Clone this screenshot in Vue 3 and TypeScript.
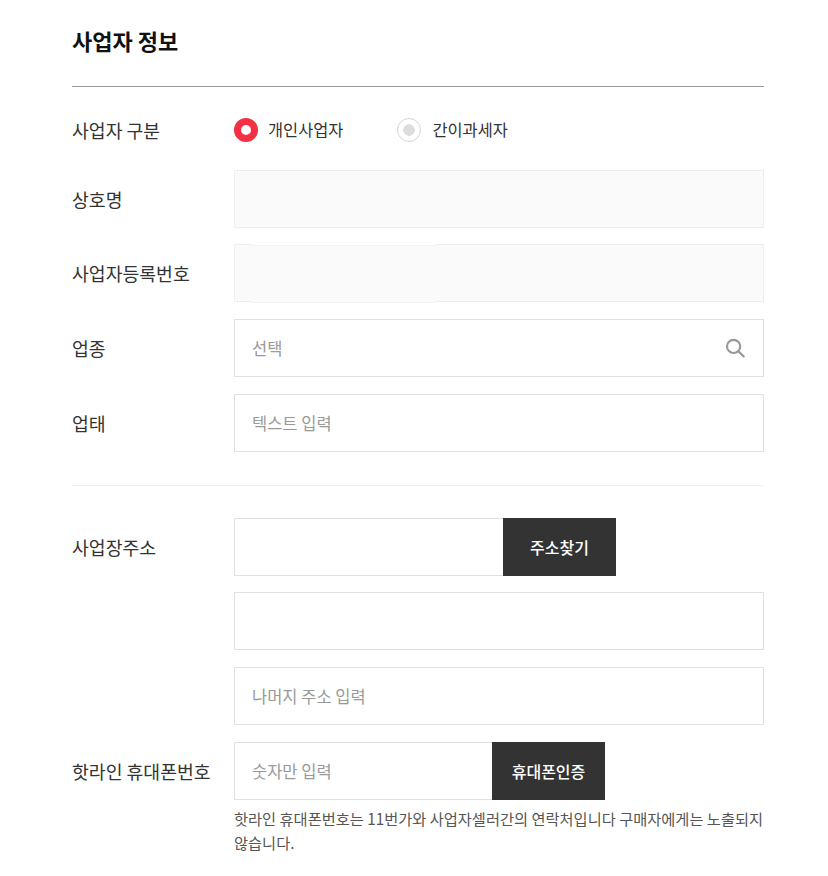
<template>
  <div class="page">
    <h2 class="title">사업자 정보</h2>

    <div class="section top">
      <div class="row radio-row">
        <div class="label">사업자 구분</div>
        <div class="radios">
          <label v-for="r in radios" :key="r.text" class="radio" :class="{ on: r.on }">
            <span class="mark"></span>
            <span class="radio-text">{{ r.text }}</span>
          </label>
        </div>
      </div>

      <div class="row">
        <div class="label">상호명</div>
        <div class="field filled"></div>
      </div>
      <div class="row">
        <div class="label">사업자등록번호</div>
        <div class="field filled masked"><span class="mask"></span></div>
      </div>
      <div class="row">
        <div class="label">업종</div>
        <div class="field">
          <span class="ph">선택</span>
          <svg class="search" viewBox="0 0 20 20" width="20" height="20" fill="none" stroke="#999" stroke-width="2.2">
            <circle cx="8.6" cy="8.4" r="6.6" />
            <path d="M13.4 13.2 18.6 18.4" stroke-linecap="round" />
          </svg>
        </div>
      </div>
      <div class="row">
        <div class="label">업태</div>
        <div class="field"><span class="ph">텍스트 입력</span></div>
      </div>
    </div>

    <div class="section bottom">
      <div class="row">
        <div class="label">사업장주소</div>
        <div class="combo">
          <div class="field short"></div>
          <button class="btn addr" type="button">주소찾기</button>
        </div>
      </div>
      <div class="row">
        <div class="label"></div>
        <div class="field"></div>
      </div>
      <div class="row">
        <div class="label"></div>
        <div class="field"><span class="ph">나머지 주소 입력</span></div>
      </div>
      <div class="row">
        <div class="label">핫라인 휴대폰번호</div>
        <div class="combo">
          <div class="field phone"><span class="ph">숫자만 입력</span></div>
          <button class="btn cert" type="button">휴대폰인증</button>
        </div>
      </div>
      <p class="note">핫라인 휴대폰번호는 11번가와 사업자셀러간의 연락처입니다 구매자에게는 노출되지 않습니다.</p>
    </div>
  </div>
</template>

<script setup lang="ts">
interface RadioItem {
  text: string
  on: boolean
}

const radios: RadioItem[] = [
  { text: '개인사업자', on: true },
  { text: '간이과세자', on: false }
]
</script>

<style>
html,
body {
  margin: 0;
  background: #ffffff;
}
</style>

<style scoped>
.page {
  box-sizing: border-box;
  width: 828px;
  height: 876px;
  padding: 0 64px 0 72px;
  overflow: hidden;
  font-family: "Noto Sans CJK KR", "Liberation Sans", sans-serif;
  color: #333333;
}

.title {
  box-sizing: border-box;
  height: 87px;
  margin: 0;
  padding-top: 25px;
  border-bottom: 1px solid #999999;
  font-size: 22px;
  line-height: 30px;
  font-weight: 700;
  color: #111111;
}

.section {
  display: flex;
  flex-direction: column;
  gap: 16.67px;
}

.top {
  padding-top: 23px;
  padding-bottom: 33px;
  border-bottom: 1px solid #f0f0f0;
}

.bottom {
  padding-top: 32.2px;
}

.row {
  display: flex;
  align-items: center;
  height: 58px;
}

.radio-row {
  height: 40px;
  margin-bottom: 3px;
}

.label {
  flex: 0 0 162px;
  font-size: 18.3px;
  line-height: 24px;
  color: #333333;
}

.radios {
  display: flex;
  gap: 54px;
}

.radio {
  display: flex;
  align-items: center;
  gap: 10px;
}

.mark {
  box-sizing: border-box;
  width: 24px;
  height: 24px;
  border-radius: 50%;
  border: 1px solid #d4d4d4;
  background: radial-gradient(circle, #dddddd 0 5.5px, #ffffff 6px);
}

.radio.on .mark {
  border: 7px solid #f43142;
  background: #ffffff;
}

.radio-text {
  margin-bottom: 2px;
  font-size: 16.4px;
  line-height: 22px;
  color: #333333;
}

.radio:last-child .radio-text {
  margin-left: 1px;
}

.field {
  box-sizing: border-box;
  flex: 1;
  height: 58px;
  display: flex;
  align-items: center;
  justify-content: space-between;
  padding: 0 18px 0 17px;
  border: 1px solid #e0e0e0;
  background: #ffffff;
}

.filled {
  background: #fafafa;
  border-color: #eeeeee;
}

.masked {
  position: relative;
}

/* 가려진 입력값 영역: 위아래 테두리가 1px 어긋나 있음 */
.mask {
  position: absolute;
  left: 16px;
  top: 0;
  box-sizing: border-box;
  width: 185px;
  height: 58px;
  background: #fafafa;
  border-top: 1px solid #f3f3f3;
  border-bottom: 1px solid #f3f3f3;
  box-shadow: 0 -1px 0 #ffffff;
}

.ph {
  font-size: 16.5px;
  color: #999999;
}

.combo {
  display: flex;
  flex: 1;
  height: 58px;
}

.short {
  flex: 0 0 269px;
  border-right: 0;
}

.phone {
  flex: 0 0 258px;
  border-right: 0;
}

.btn {
  height: 58px;
  padding: 0;
  border: 1px solid #333333;
  background: #333333;
  color: #ffffff;
  font-family: inherit;
  font-size: 16px;
  font-weight: 500;
}

.addr,
.cert {
  width: 113px;
}

.note {
  margin: -10px 0 0 162px;
  font-size: 15.28px;
  line-height: 24px;
  color: #555555;
}
</style>
